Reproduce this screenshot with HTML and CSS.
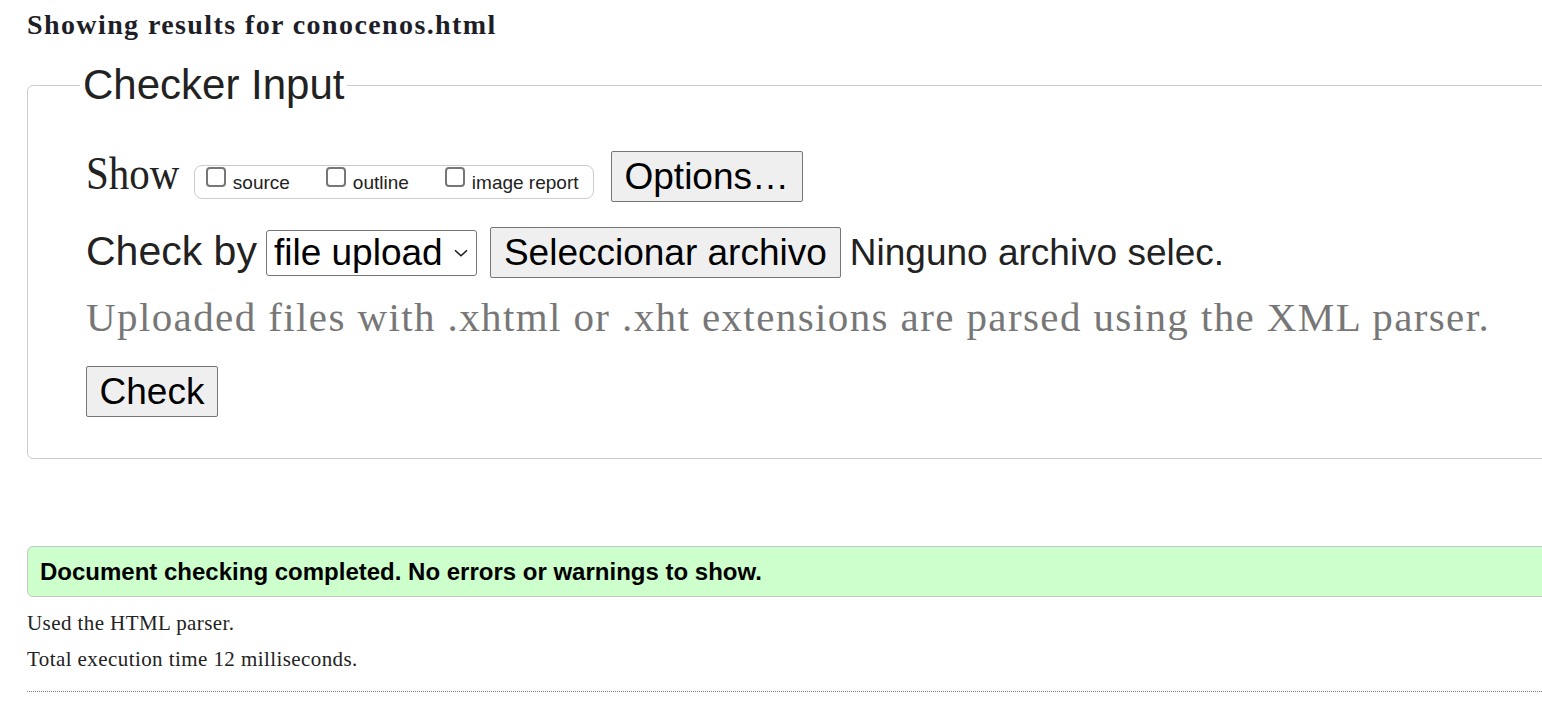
FILE: index.html
```html
<!DOCTYPE html>
<html lang="en">
<head>
<meta charset="utf-8">
<title>Showing results for conocenos.html - Nu Html Checker</title>
<link rel="stylesheet" href="styles.css">
</head>
<body>
<h2 class="results-title">Showing results for conocenos.html</h2>
<form class="checker">
  <fieldset class="checker-input">
    <legend class="checker-legend">Checker Input</legend>
    <div class="row row-show">
      <span class="show-label">Show</span>
      <span class="show-options"><label class="opt"><input type="checkbox" class="box">source</label><label class="opt"><input type="checkbox" class="box">outline</label><label class="opt"><input type="checkbox" class="box">image report</label></span>
      <button type="button" class="btn btn-options">Options…</button>
    </div>
    <div class="row row-checkby">
      <label class="checkby-label">Check by</label>
      <span class="method-wrap">
        <select class="method"><option>file upload</option></select>
        <svg class="method-arrow" width="14" height="8" viewBox="0 0 14 8" aria-hidden="true"><path d="M1 1.2l6 5.6 6-5.6" fill="none" stroke="#1a1a1a" stroke-width="1.5"/></svg>
      </span>
      <button type="button" class="btn btn-file">Seleccionar archivo</button>
      <span class="file-status">Ninguno archivo selec.</span>
    </div>
    <p class="hint">Uploaded files with .xhtml or .xht extensions are parsed using the XML parser.</p>
    <div class="row row-submit">
      <button type="submit" class="btn btn-check">Check</button>
    </div>
  </fieldset>
</form>
<div class="success">Document checking completed. No errors or warnings to show.</div>
<p class="details details-first">Used the HTML parser.</p>
<p class="details">Total execution time 12 milliseconds.</p>
<hr class="divider">
</body>
</html>
```
FILE: styles.css
```css
html {
  overflow-x: hidden;
}

body {
  margin: 0;
  padding: 7px 0 0 27px;
  font-family: "Liberation Serif", "Times New Roman", serif;
  color: #222;
  background: #fff;
}

.results-title {
  margin: 0;
  font: bold 28px/36px "Liberation Serif", "Times New Roman", serif;
  letter-spacing: 0.05em;
  color: #1e1e28;
}

.checker {
  margin: 18px -40px 0 0;
}

.checker-input {
  margin: 0;
  min-width: 0;
  border: 1px solid #ccc;
  border-radius: 6px;
  padding: 42px 0 41px 58px;
}

.checker-legend {
  margin-left: -6px;
  padding: 0 3px;
  font: 42px/48px "Liberation Sans", Arial, sans-serif;
  color: #222;
}

.row {
  display: flex;
  align-items: baseline;
}

.show-label {
  display: inline-block;
  font: 46px/40px "Liberation Serif", "Times New Roman", serif;
  color: #222;
  transform: scaleX(0.89);
  transform-origin: 0 50%;
  margin-right: -11px;
}

.show-options {
  display: inline-flex;
  align-items: baseline;
  margin-left: 14px;
  border: 1px solid #ccc;
  border-radius: 8px;
  padding: 1px 14px 4px 11px;
  font: 19px "Liberation Sans", Arial, sans-serif;
  color: #222;
}

.opt {
  display: block;
}

.opt + .opt {
  margin-left: 36px;
}

.box {
  -webkit-appearance: none;
  appearance: none;
  box-sizing: border-box;
  width: 20px;
  height: 20px;
  margin: 0 7px 2px 0;
  border: 2px solid #767676;
  border-radius: 4px;
  background: #fff;
  vertical-align: baseline;
}

.btn {
  font: 37px/43px "Liberation Sans", Arial, sans-serif;
  color: #000;
  background: #efefef;
  border: 1px solid #767676;
  border-radius: 2px;
  padding: 3px 12px;
}

.btn-options {
  margin-left: 17px;
  padding: 3px 13px;
}

.row-checkby {
  margin-top: 25px;
}

.checkby-label {
  font: 41px "Liberation Sans", Arial, sans-serif;
  color: #222;
}

.method-wrap {
  position: relative;
  display: inline-flex;
  margin-left: 9px;
}

.method {
  -webkit-appearance: none;
  appearance: none;
  box-sizing: border-box;
  width: 211px;
  height: 46px;
  font: 37px/42px "Liberation Sans", Arial, sans-serif;
  color: #000;
  background: #fff;
  border: 1px solid #767676;
  border-radius: 3px;
  padding: 1px 0 1px 7px;
}

.method-arrow {
  position: absolute;
  right: 9px;
  top: 50%;
  transform: translateY(-50%);
  pointer-events: none;
}

.btn-file {
  margin-left: 13px;
  padding: 3px 13px;
}

.file-status {
  margin-left: 9px;
  font: 37px "Liberation Sans", Arial, sans-serif;
  color: #222;
}

.hint {
  margin: 15px 0 0;
  font: 41px/48px "Liberation Serif", "Times New Roman", serif;
  letter-spacing: 0.034em;
  color: #777;
}

.row-submit {
  margin-top: 25px;
}

.btn-check {
  padding: 3px 12.5px;
}

.success {
  margin: 87px -40px 0 0;
  padding: 11px 0 10px 12px;
  background: #cfc;
  border: 1px solid #c6c6c6;
  border-radius: 6px;
  font: bold 24px/28px "Liberation Sans", Arial, sans-serif;
  color: #000;
}

.details {
  margin: 0;
  font: 21px/36px "Liberation Serif", "Times New Roman", serif;
  letter-spacing: 0.02em;
  color: #222;
}

.details-first {
  margin-top: 8px;
}

.divider {
  margin: 14px -40px 0 0;
  height: 0;
  border: 0;
  border-top: 1px dotted #777;
}
```
